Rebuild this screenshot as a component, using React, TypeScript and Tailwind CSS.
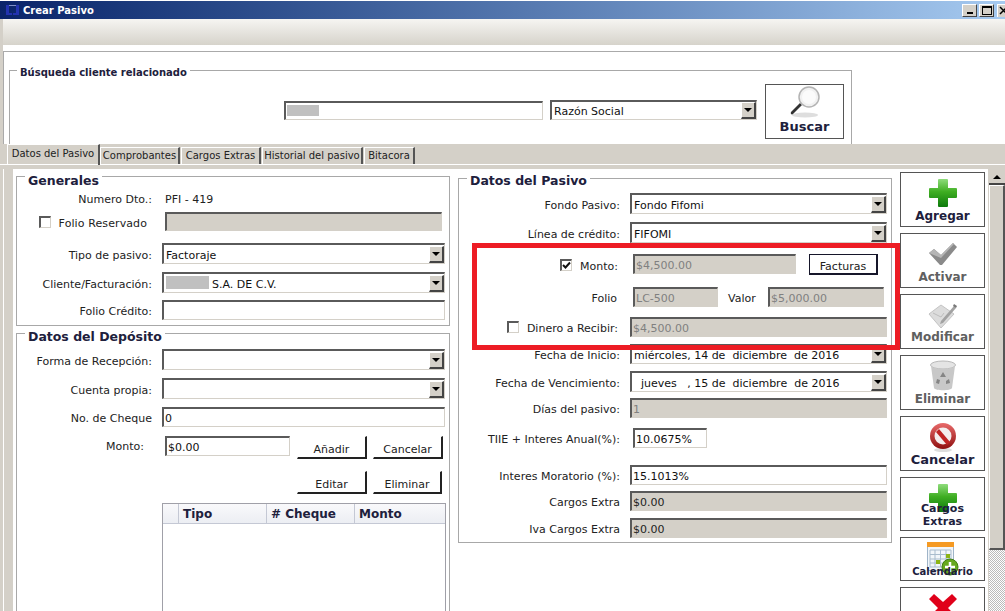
import type { ReactNode } from 'react'

const sunken = 'box-border border-t-2 border-l-2 border-r border-b border-t-[#5a5a5a] border-l-[#5a5a5a] border-r-[#d4d0c8] border-b-[#d4d0c8]'

function Field({ value, className, disabled }: { value?: ReactNode; className: string; disabled?: boolean }) {
  return (
    <div className={`${sunken} flex items-center overflow-hidden whitespace-nowrap pt-[3px] pl-px ${disabled ? 'bg-[#d4d0c8] text-[#808080]' : 'bg-white text-[#111]'} ${className}`}>
      {value}
    </div>
  )
}

function Arrow() {
  return <div className="h-0 w-0 border-x-[4px] border-t-[4px] border-x-transparent border-t-black" />
}

function Select({ value, className }: { value?: ReactNode; className: string }) {
  return (
    <div className={`${sunken} flex items-center justify-between whitespace-nowrap bg-white pl-[2px] text-[#111] ${className}`}>
      <div className="flex items-center pt-[3px]">{value}</div>
      <div className="flex h-[17px] w-[15px] items-center justify-center border-t border-l border-r-2 border-b-2 border-t-white border-l-white border-r-[#444] border-b-[#444] bg-[#d4d0c8]">
        <Arrow />
      </div>
    </div>
  )
}

function Check({ checked }: { checked?: boolean }) {
  return (
    <div className={`${sunken} flex h-[12px] w-[12px] -translate-y-[2px] items-center justify-center bg-white`}>
      {checked && (
        <svg width="9" height="9" viewBox="0 0 9 9">
          <path d="M1 4l2.5 2.5L8 1.5" fill="none" stroke="#111" strokeWidth="2" />
        </svg>
      )}
    </div>
  )
}

function Row({ label, w, className, children }: { label?: ReactNode; w: string; className: string; children: ReactNode }) {
  return (
    <div className={`flex items-center ${className}`}>
      <div className={`flex shrink-0 items-center justify-end whitespace-nowrap pt-[4px] ${w}`}>{label}</div>
      {children}
    </div>
  )
}

function Group({ title, className, legend, children }: { title: string; className: string; legend: string; children: ReactNode }) {
  return (
    <div className={`relative box-border border border-[#a8a8a8] ${className}`}>
      <div className={`absolute bg-white px-[3px] font-bold whitespace-nowrap text-[#20203c] ${legend}`}>{title}</div>
      {children}
    </div>
  )
}

function Flat({ label, className }: { label: string; className: string }) {
  return (
    <button className={`box-border flex items-center justify-center border-r-2 border-b-2 border-t border-l border-r-[#222] border-b-[#222] border-t-white border-l-white bg-white pt-[5px] text-[#222] ${className}`}>
      {label}
    </button>
  )
}

function PlusIcon({ id }: { id: string }) {
  return (
    <svg width="30" height="30" viewBox="0 0 30 30">
      <defs>
        <linearGradient id={id} x1="0" y1="0" x2="0" y2="1">
          <stop offset="0" stopColor="#8fdc7c" />
          <stop offset="0.45" stopColor="#3fae22" />
          <stop offset="1" stopColor="#0d7a0c" />
        </linearGradient>
      </defs>
      <path d="M11 1h8a1 1 0 0 1 1 1v8h8a1 1 0 0 1 1 1v8a1 1 0 0 1-1 1h-8v8a1 1 0 0 1-1 1h-8a1 1 0 0 1-1-1v-8H2a1 1 0 0 1-1-1v-8a1 1 0 0 1 1-1h8V2a1 1 0 0 1 1-1z" fill={`url(#${id})`} />
    </svg>
  )
}

function CheckIcon() {
  return (
    <svg width="30" height="24" viewBox="0 0 30 24">
      <path d="M1 11l5-4 7 6L25 1l4 4-15 18h-2z" fill="#8a8a8a" />
      <path d="M1 11l5-4 7 6L25 1l1 1-13 14z" fill="#b5b5b5" />
    </svg>
  )
}

function NoteIcon() {
  return (
    <svg width="30" height="30" viewBox="0 0 30 30">
      <path d="M1 14L13 5l13 9-13 14z" fill="#dcdcdc" stroke="#c4c4c4" />
      <path d="M5 13l8 4 3-4" fill="none" stroke="#bdbdbd" />
      <path d="M13 21L26 6l2 2-13 15-3 1z" fill="#a2a2a2" />
      <path d="M26 4l3 2-1 2-3-2z" fill="#777" />
    </svg>
  )
}

function BinIcon() {
  return (
    <svg width="28" height="32" viewBox="0 0 28 32">
      <ellipse cx="14" cy="5" rx="12.5" ry="4" fill="#e4e4e4" stroke="#b8b8b8" />
      <path d="M2 6l3 22c1 3 17 3 18 0l3-22c-4 4-20 4-24 0z" fill="#c8c8c8" />
      <path d="M14 12l3 5h-6zM8 19l3 1-1 4-3-1zM20 19l1 4-4 1v-3z" fill="#858585" />
    </svg>
  )
}

function BanIcon() {
  return (
    <svg width="28" height="30" viewBox="0 0 28 30">
      <defs>
        <linearGradient id="ban" x1="0" y1="0" x2="0" y2="1">
          <stop offset="0" stopColor="#e86a6a" />
          <stop offset="1" stopColor="#8f1010" />
        </linearGradient>
      </defs>
      <ellipse cx="14" cy="28" rx="9" ry="2" fill="#ddd" />
      <circle cx="14" cy="14" r="13" fill="url(#ban)" />
      <circle cx="14" cy="14" r="8.5" fill="#f4eded" />
      <path d="M7 10l3-3 11 13-3 3z" fill="#c02424" />
    </svg>
  )
}

function CalendarIcon() {
  return (
    <svg width="32" height="34" viewBox="0 0 32 34">
      <rect x="0.5" y="0.5" width="26" height="28" fill="#f2f6fa" stroke="#9fb4c8" />
      <rect x="0" y="0" width="27" height="5" fill="#f59a23" />
      <path d="M3 8h21v17H3zM3 12.5h21M3 17h21M3 21h21M8 8v17M13.500 8v17M19 8v17" fill="none" stroke="#a9bccd" />
      <rect x="9" y="18" width="4" height="4" fill="#8cb414" />
      <rect x="19" y="12" width="4" height="4" fill="#8cb414" />
      <circle cx="23" cy="25" r="8" fill="#66a81e" stroke="#3f7f12" />
      <path d="M23 20v10M18 25h10" stroke="#fff" strokeWidth="2.500" />
    </svg>
  )
}

function XIcon() {
  return (
    <svg width="30" height="30" viewBox="0 0 30 30">
      <path d="M6 1l9 8 9-8 5 5-9 9 9 9-5 5-9-8-9 8-5-5 9-9-9-9z" fill="#e0001a" />
    </svg>
  )
}

function SearchIcon() {
  return (
    <svg width="34" height="34" viewBox="0 0 34 34">
      <ellipse cx="17" cy="30" rx="13" ry="2.500" fill="#dedede" />
      <path d="M3 27l9-9 2 2-9 9c-1 1-3 0-2-2z" fill="#333" />
      <circle cx="21" cy="12" r="10" fill="#f1f1f1" stroke="#b4b4b4" strokeWidth="1.500" />
      <circle cx="21" cy="12" r="7" fill="#fbfbfb" />
    </svg>
  )
}

function Action({ label, className, muted, text = 'text-[12px]', children }: { label?: string; className: string; muted?: boolean; text?: string; children: ReactNode }) {
  return (
    <div className={`box-border flex shrink-0 flex-col items-center border border-[#555] bg-white ${className}`}>
      {children}
      {label && <div className={`leading-[15px] font-bold ${text} ${muted ? 'text-[#606060]' : 'text-[#20203c]'}`}>{label}</div>}
    </div>
  )
}

const tabs = [
  { label: 'Comprobantes', w: 'w-[80px]' },
  { label: 'Cargos Extras', w: 'w-[80px]' },
  { label: 'Historial del pasivo', w: 'w-[101px]' },
  { label: 'Bitacora', w: 'w-[51px]' },
]

export default function App() {
  return (
    <div className="relative h-[611px] w-[1005px] overflow-hidden bg-white font-['DejaVu_Sans',sans-serif] text-[11px] leading-[14px] text-[#222]">
      {/* barra de titulo */}
      <div className="mt-px flex h-[18px] items-center bg-gradient-to-r from-[#0a246a] to-[#a6caf0] pl-[5px]">
        <svg width="15" height="12" viewBox="0 0 15 12" className="shrink-0">
          <path d="M1 1h3v8h3v2H1zM14 1h-3v8H8v2h6z" fill="#2233b0" />
          <path d="M4 1h7v1H4z" fill="#7f8fc8" />
        </svg>
        <div className="ml-[3px] pt-px text-[10px] font-bold text-white">Crear Pasivo</div>
        <div className="ml-auto flex gap-[2px]">
          <div className="flex h-[13px] w-[15px] items-end justify-center border border-t-white border-l-white border-r-[#444] border-b-[#444] bg-[#d4d0c8] pb-[2px]">
            <div className="h-[2px] w-[6px] bg-black" />
          </div>
          <div className="flex h-[13px] w-[15px] items-center justify-center border border-t-white border-l-white border-r-[#444] border-b-[#444] bg-[#d4d0c8]">
            <div className="h-[9px] w-[10px] border border-t-2 border-black" />
          </div>
          <div className="ml-px h-[13px] w-[8px] overflow-hidden border-t border-l border-t-white border-l-white bg-[#d4d0c8]">
            <svg width="9" height="9" viewBox="0 0 9 9" className="mt-px ml-px">
              <path d="M1 1l7 7M8 1l-7 7" stroke="#000" strokeWidth="1.500" />
            </svg>
          </div>
        </div>
      </div>

      <div className="flex">
        <div className="w-[3px] shrink-0 bg-[#d4d0c8]" />
        <div className="min-w-0 flex-1">
          {/* barra de herramientas */}
          <div className="h-[26px] bg-gradient-to-b from-[#f6f5f2] to-[#d6d3cb]" />
          <div className="mt-[6px] box-border h-[93px] border-t border-l border-[#aaa] pt-[18px] pl-[5px]">
            <Group title="Búsqueda cliente relacionado" legend="-top-[5px] left-[7px] text-[10px]" className="h-[75px] w-[843px] border-b-0">
              <div className="flex h-[74px] flex-col">
                <div className="mt-[13px] flex">
                  <Field value={<div className="h-[11px] w-[32px] -translate-y-[2px] bg-[#c0c0c0]" />} className="mt-[17px] ml-[274px] h-[19px] w-[259px]" />
                  <Select value="Razón Social" className="mt-[16px] ml-[7px] h-[20px] w-[207px]" />
                  <Action label="Buscar" text="text-[13px]" className="ml-[8px] h-[55px] w-[79px]">
                    <SearchIcon />
                  </Action>
                </div>
                <div className="mt-auto flex justify-between">
                  <div className="h-px w-[5px] bg-[#a8a8a8]" />
                  <div className="h-px w-[4px] bg-[#a8a8a8]" />
                </div>
              </div>
            </Group>
          </div>
        </div>
      </div>

      {/* pestañas */}
      <div className="relative flex h-[21px] border-b border-b-white bg-[#d4d0c8] pl-[7px] text-[10px] whitespace-nowrap">
        <div className="z-10 flex h-[21px] w-[93px] items-center justify-center border-t border-l border-r-2 border-t-white border-l-white border-r-[#555] pb-[3px]">
          Datos del Pasivo
        </div>
        <div className="flex gap-px pt-[3px]">
          {tabs.map(t => (
            <div key={t.label} className={`box-border flex h-[17px] items-center justify-center border-t border-l border-r-2 border-t-white border-l-white border-r-[#555] ${t.w}`}>
              {t.label}
            </div>
          ))}
        </div>
      </div>

      {/* cuerpo */}
      <div className="flex h-[446px] overflow-hidden bg-[#d4d0c8] pt-[4px]">
        <div className="w-[13px] shrink-0 border-l-[3px] border-l-[#d4d0c8]">
          <div className="h-full w-px bg-white" />
        </div>
        <div className="flex h-full w-[975px] shrink-0 bg-white pl-[3px]">
          <div className="w-[434px] shrink-0 pt-[7px]">
            <Group title="Generales" legend="-top-[3px] left-[8px] text-[12.500px]" className="h-[150px]">
              <Row w="w-[135px]" label="Numero Dto.:" className="mt-[13px] h-[16px]">
                <div className="ml-[13px] pt-[4px]">PFI - 419</div>
              </Row>
              <Row
                w="w-[135px]"
                label={
                  <div className="mr-[5px] flex items-center gap-[8px]">
                    <Check />
                    <span className="tracking-[0.1px]">Folio Reservado</span>
                  </div>
                }
                className="mt-[6px] h-[19px]"
              >
                <Field disabled className="ml-[13px] h-[19px] w-[277px]" />
              </Row>
              <Row w="w-[135px]" label="Tipo de pasivo:" className="mt-[12px] h-[21px]">
                <Select value="Factoraje" className="ml-[10px] h-[21px] w-[283px]" />
              </Row>
              <Row w="w-[135px]" label="Cliente/Facturación:" className="mt-[8px] h-[21px]">
                <Select
                  value={
                    <>
                      <div className="h-[13px] w-[43px] -translate-y-[2px] bg-[#c0c0c0]" />
                      <span className="ml-[3px]">S.A. DE C.V.</span>
                    </>
                  }
                  className="ml-[10px] h-[21px] w-[283px]"
                />
              </Row>
              <Row w="w-[135px]" label="Folio Crédito:" className="mt-[7px] h-[20px]">
                <Field className="ml-[10px] h-[20px] w-[283px]" />
              </Row>
            </Group>
            <Group title="Datos del Depósito" legend="-top-[4px] left-[8px] text-[12.500px]" className="mt-[7px] h-[300px]">
              <Row w="w-[135px]" label="Forma de Recepción:" className="mt-[15px] h-[21px]">
                <Select className="ml-[10px] h-[21px] w-[283px]" />
              </Row>
              <Row w="w-[135px]" label="Cuenta propia:" className="mt-[8px] h-[21px]">
                <Select className="ml-[10px] h-[21px] w-[283px]" />
              </Row>
              <Row w="w-[135px]" label="No. de Cheque" className="mt-[8px] h-[20px]">
                <Field value="0" className="ml-[10px] h-[20px] w-[283px]" />
              </Row>
              <Row w="w-[127px]" label="Monto:" className="mt-[9px] h-[23px] !items-start">
                <Field value="$0.00" className="ml-[21px] h-[20px] w-[125px]" />
                <Flat label="Añadir" className="ml-[7px] h-[23px] w-[70px]" />
                <Flat label="Cancelar" className="ml-[6px] h-[23px] w-[70px]" />
              </Row>
              <div className="mt-[12px] ml-[280px] flex">
                <Flat label="Editar" className="h-[23px] w-[70px]" />
                <Flat label="Eliminar" className="ml-[6px] h-[23px] w-[69px]" />
              </div>
              <div className="mt-[9px] ml-[145px] box-border h-[120px] w-[284px] border border-[#a0a0a8]">
                <div className="flex h-[20px] border-b border-[#c4c8d4] bg-gradient-to-b from-[#f9f9fb] to-[#eceef3] text-[12px] font-bold text-[#20203c]">
                  <div className="w-[16px] border-r border-[#c4c8d4]" />
                  <div className="w-[88px] border-r border-[#c4c8d4] pt-[3px] pl-[4px]">Tipo</div>
                  <div className="w-[88px] border-r border-[#c4c8d4] pt-[3px] pl-[4px]">#&nbsp;Cheque</div>
                  <div className="flex-1 pt-[3px] pl-[4px]">Monto</div>
                </div>
              </div>
            </Group>
          </div>

          <div className="ml-[8px] w-[434px] shrink-0 pt-[9px]">
            <Group title="Datos del Pasivo" legend="-top-[5px] left-[8px] text-[12.500px]" className="h-[365px]">
              <Row w="w-[161px]" label="Fondo Pasivo:" className="mt-[14px] h-[21px]">
                <Select value="Fondo Fifomi" className="ml-[10px] h-[21px] w-[257px]" />
              </Row>
              <Row w="w-[161px]" label="Línea de crédito:" className="mt-[8px] h-[21px]">
                <Select value="FIFOMI" className="ml-[10px] h-[21px] w-[257px]" />
              </Row>
              <Row
                w="w-[159px]"
                label={
                  <div className="flex items-center gap-[8px]">
                    <Check checked />
                    <span>Monto:</span>
                  </div>
                }
                className="mt-[11px] h-[21px]"
              >
                <Field disabled value="$4,500.00" className="ml-[15px] h-[20px] w-[163px] self-start" />
                <button className="ml-[13px] box-border flex h-[21px] w-[69px] items-center justify-center border border-r-2 border-b-2 border-[#16162a] bg-white pt-[5px] text-[#222]">
                  Facturas
                </button>
              </Row>
              <Row w="w-[158px]" label="Folio" className="mt-[12px] h-[20px]">
                <Field disabled value="LC-500" className="ml-[16px] h-[20px] w-[85px]" />
                <div className="ml-[10px] w-[28px] pt-[4px]">Valor</div>
                <Field disabled value="$5,000.00" className="ml-[12px] h-[20px] w-[116px]" />
              </Row>
              <Row
                w="w-[159px]"
                label={
                  <div className="flex items-center gap-[8px]">
                    <Check />
                    <span>Dinero a Recibir:</span>
                  </div>
                }
                className="mt-[10px] h-[20px]"
              >
                <Field disabled value="$4,500.00" className="ml-[12px] h-[20px] w-[257px]" />
              </Row>
              <Row w="w-[161px]" label="Fecha de Inicio:" className="mt-[7px] h-[20px]">
                <Select value={<span className="whitespace-pre">miércoles, 14 de  diciembre  de 2016</span>} className="ml-[10px] h-[20px] w-[257px]" />
              </Row>
              <Row w="w-[161px]" label="Fecha de Vencimiento:" className="mt-[7px] h-[21px]">
                <Select value={<span className="whitespace-pre">  jueves   , 15 de  diciembre  de 2016</span>} className="ml-[10px] h-[21px] w-[257px]" />
              </Row>
              <Row w="w-[161px]" label="Días del pasivo:" className="mt-[6px] h-[20px]">
                <Field disabled value="1" className="ml-[10px] h-[20px] w-[257px]" />
              </Row>
              <Row w="w-[161px]" label="TIIE + Interes Anual(%):" className="mt-[10px] h-[20px]">
                <Field value="10.0675%" className="ml-[13px] h-[20px] w-[74px]" />
              </Row>
              <Row w="w-[161px]" label="Interes Moratorio (%):" className="mt-[17px] h-[20px]">
                <Field value="15.1013%" className="ml-[10px] h-[20px] w-[257px]" />
              </Row>
              <Row w="w-[161px]" label="Cargos Extra" className="mt-[6px] h-[20px]">
                <Field disabled value="$0.00" className="ml-[10px] h-[20px] w-[257px] !text-[#222]" />
              </Row>
              <Row w="w-[161px]" label="Iva Cargos Extra" className="mt-[7px] h-[20px]">
                <Field disabled value="$0.00" className="ml-[10px] h-[20px] w-[257px] !text-[#222]" />
              </Row>
            </Group>
          </div>

          <div className="ml-[8px] flex w-[85px] shrink-0 flex-col gap-[6px] pt-[3px]">
            <Action label="Agregar" className="h-[55px] pt-[5px]">
              <div className="mb-px h-[30px]"><PlusIcon id="plus-a" /></div>
            </Action>
            <Action label="Activar" muted className="h-[55px] pt-[8px]">
              <div className="mb-[4px] h-[24px]"><CheckIcon /></div>
            </Action>
            <Action label="Modificar" muted className="h-[55px] pt-[5px]">
              <div className="h-[30px]"><NoteIcon /></div>
            </Action>
            <Action label="Eliminar" muted className="h-[55px] pt-[4px]">
              <div className="h-[32px]"><BinIcon /></div>
            </Action>
            <Action label="Cancelar" text="text-[13px]" className="h-[55px] pt-[5px]">
              <div className="h-[30px]"><BanIcon /></div>
            </Action>
            <Action className="relative h-[54px] pt-[5px]">
              <PlusIcon id="plus-b" />
              <div className="absolute top-[24px] text-center text-[11px] leading-[13px] font-bold text-[#20203c]">
                Cargos
                <br />
                Extras
              </div>
            </Action>
            <Action className="relative h-[44px] pt-[4px]">
              <CalendarIcon />
              <div className="absolute top-[27px] text-[10px] leading-[14px] font-bold text-[#20203c]">Calendario</div>
            </Action>
            <Action className="h-[55px] pt-[5px]">
              <XIcon />
            </Action>
          </div>
        </div>
        {/* scrollbar */}
        <div className="ml-px flex w-[16px] shrink-0 flex-col bg-[#d4d0c8] pt-[2px]">
          <div className="flex h-[14px] items-center justify-center border-b-2 border-b-[#444]">
            <div className="h-0 w-0 border-x-[4px] border-b-[4px] border-x-transparent border-b-black" />
          </div>
          <div className="box-border h-[365px] border-t border-l border-r-2 border-b-2 border-t-white border-l-white border-r-[#555] border-b-[#555]" />
          <div className="flex-1 bg-[repeating-conic-gradient(#bbb_0_25%,#fff_0_50%)] bg-[length:2px_2px]" />
        </div>
      </div>

      {/* recuadro rojo */}
      <div className="absolute top-[243px] left-[472px] box-border h-[107px] w-[428px] border-[5px] border-[#ed1c24]" />
    </div>
  )
}
